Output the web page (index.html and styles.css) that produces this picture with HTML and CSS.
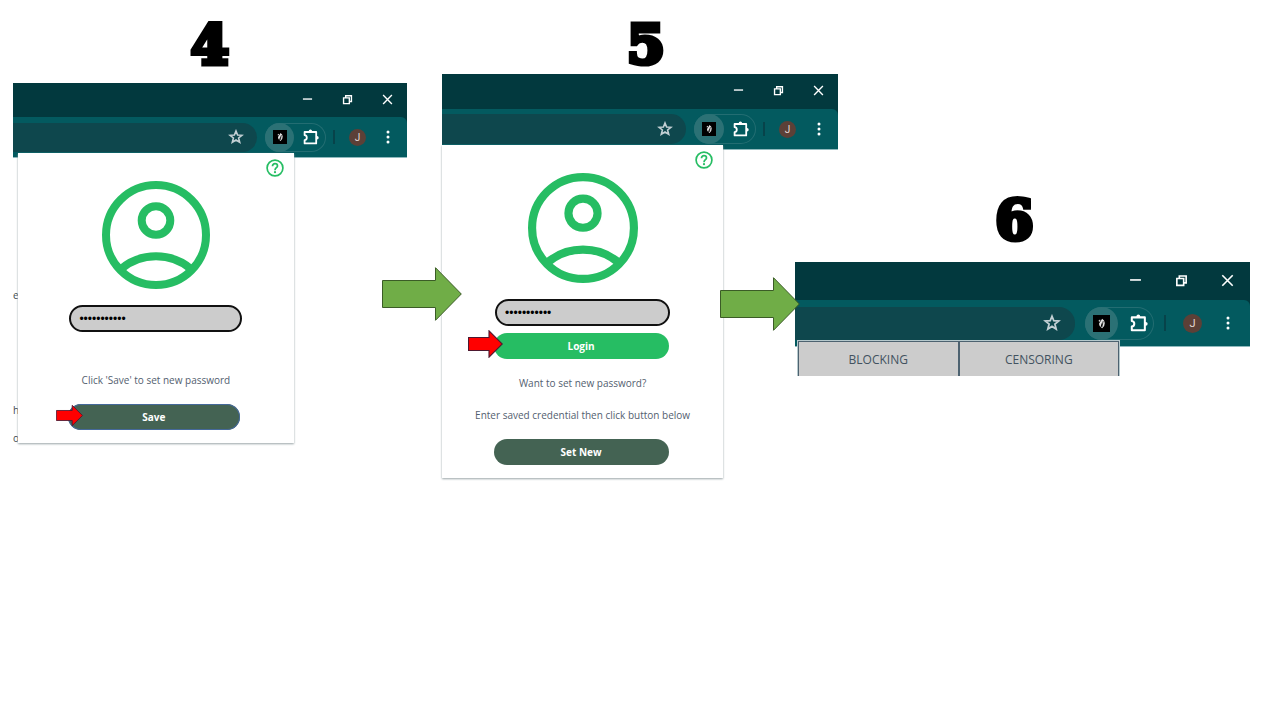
FILE: index.html
```html
<!DOCTYPE html>
<html lang="en">
<head>
<meta charset="utf-8">
<meta name="viewport" content="width=device-width, initial-scale=1">
<title>Extension setup: steps 4 to 6</title>
<link rel="stylesheet" href="styles.css">
</head>
<body>
<svg class="sprite" aria-hidden="true">
  <symbol id="minimize" viewBox="0 0 12 12"><path d="M1 5.500h10" fill="none" stroke="#fff" stroke-width="1.500"/></symbol>
  <symbol id="restore" viewBox="0 0 12 12"><path d="M1.700 4.200h6.300v6.300H1.700zM4 4V1.900h6.300v6.300H8.200" fill="none" stroke="#fff" stroke-width="1.500"/></symbol>
  <symbol id="close" viewBox="0 0 12 12"><path d="M1.200 1.200l9.600 9.600M10.800 1.200l-9.600 9.600" fill="none" stroke="#fff" stroke-width="1.500"/></symbol>
  <symbol id="star" viewBox="0 0 16 16"><path d="M8 2l1.600 4 4.300.300-3.300 2.700 1.100 4.300L8 11l-3.700 2.300 1.100-4.300-3.300-2.700L6.400 6z" fill="none" stroke="#c3d0d4" stroke-width="1.600"/></symbol>
  <symbol id="feather" viewBox="0 0 14 14"><path fill="#000" d="M0 0h14v14H0z"/><path fill="#e6e6e6" d="M7.500 3l1.600 1.500.6 2-.5 2.500L7.500 11l-.8-.6 1-2.400-.2-2-.9 2.400-.4 1.600-1-1.500-.2-1.600L6.400 5z"/><path fill="#ccc" d="M4.600 4.600l1.200-.8.4.9-1.200 1.100z"/><path stroke="#000" stroke-width=".6" d="M8.400 5L7.300 10"/></symbol>
  <symbol id="puzzle" viewBox="0 0 16 16"><path d="M1.600 3h11.600v11.400H1.600v-3.200c1.500-.2 2.200-1.200 2.200-2.500S3.100 6.400 1.600 6.200z" fill="none" stroke="#fff" stroke-width="1.800" stroke-linejoin="round"/><path d="M5.700 2.800v-.6a1.700 1.700 0 0 1 3.400 0v.6zM13.400 7h.6a1.700 1.700 0 0 1 0 3.400h-.6z" fill="#fff"/></symbol>
  <symbol id="dots" viewBox="0 0 4 16"><g fill="#fff"><circle cx="2" cy="3" r="1.500"/><circle cx="2" cy="8" r="1.500"/><circle cx="2" cy="13" r="1.500"/></g></symbol>
  <symbol id="help" viewBox="0 0 18 18"><g fill="none" stroke="#26bd63" stroke-width="1.700"><circle cx="9" cy="9" r="7.900"/><path d="M6.500 7.200C6.500 5.600 7.500 4.700 9 4.700s2.500.9 2.500 2.200c0 1.800-2.500 1.900-2.500 4.300"/></g><circle cx="9" cy="13.200" r="1.100" fill="#26bd63"/></symbol>
  <symbol id="person" viewBox="0 0 108 108"><g fill="none" stroke="#26bd63" stroke-width="8"><circle cx="54" cy="54" r="50"/><circle cx="54" cy="39.500" r="14.300"/><path d="M19 88C39 71 69 71 89 88"/></g></symbol>
  <symbol id="arrow-green" viewBox="0 0 80 54"><path d="M.5 13.500h53V.7L79.300 27 53.500 53.300V40.500H.5z" fill="#70ad47" stroke="#3b5c26"/></symbol>
  <symbol id="arrow-red" viewBox="0 0 35 28"><path d="M.5 7.500h20.500V.8L34.300 14 21 27.200V20.500H.5z" fill="#f00" stroke="#4d1830" stroke-width="1.100"/></symbol>
</svg>

<main class="steps">
  <section class="step step-save">
    <h2 class="number">4</h2>
    <div class="browser">
      <div class="titlebar">
        <button class="window-button" aria-label="Minimize"><svg><use href="#minimize"/></svg></button>
        <button class="window-button" aria-label="Restore"><svg><use href="#restore"/></svg></button>
        <button class="window-button" aria-label="Close"><svg><use href="#close"/></svg></button>
      </div>
      <div class="toolbar">
        <div class="omnibox"><button class="bookmark" aria-label="Bookmark"><svg><use href="#star"/></svg></button></div>
        <div class="extensions">
          <button class="extension" aria-label="Extension"><svg><use href="#feather"/></svg></button>
          <button class="puzzle" aria-label="Extensions"><svg><use href="#puzzle"/></svg></button>
        </div>
        <span class="divider"></span>
        <button class="profile">J</button>
        <button class="menu" aria-label="Menu"><svg><use href="#dots"/></svg></button>
      </div>
    </div>
    <div class="page">
      <div class="page-edge"><span>e</span><span>h</span><span>o</span></div>
      <form class="popup">
        <button class="help" type="button" aria-label="Help"><svg><use href="#help"/></svg></button>
        <svg class="person"><use href="#person"/></svg>
        <input class="password" type="password" aria-label="New password" value="abcdefghijk">
        <p class="hint">Click 'Save' to set new password</p>
        <div class="action">
          <button class="button button-dark button-focus" type="button">Save</button>
          <svg class="pointer pointer-small"><use href="#arrow-red"/></svg>
        </div>
      </form>
    </div>
  </section>

  <section class="step step-login">
    <h2 class="number">5</h2>
    <div class="browser">
      <div class="titlebar">
        <button class="window-button" aria-label="Minimize"><svg><use href="#minimize"/></svg></button>
        <button class="window-button" aria-label="Restore"><svg><use href="#restore"/></svg></button>
        <button class="window-button" aria-label="Close"><svg><use href="#close"/></svg></button>
      </div>
      <div class="toolbar">
        <div class="omnibox"><button class="bookmark" aria-label="Bookmark"><svg><use href="#star"/></svg></button></div>
        <div class="extensions">
          <button class="extension" aria-label="Extension"><svg><use href="#feather"/></svg></button>
          <button class="puzzle" aria-label="Extensions"><svg><use href="#puzzle"/></svg></button>
        </div>
        <span class="divider"></span>
        <button class="profile">J</button>
        <button class="menu" aria-label="Menu"><svg><use href="#dots"/></svg></button>
      </div>
    </div>
    <div class="page">
      <form class="popup">
        <button class="help" type="button" aria-label="Help"><svg><use href="#help"/></svg></button>
        <svg class="person"><use href="#person"/></svg>
        <input class="password" type="password" aria-label="Password" value="abcdefghijk">
        <div class="action">
          <button class="button button-green" type="button">Login</button>
          <svg class="pointer"><use href="#arrow-red"/></svg>
        </div>
        <p class="hint">Want to set new password?</p>
        <p class="hint">Enter saved credential then click button below</p>
        <div class="action">
          <button class="button button-dark" type="button">Set New</button>
        </div>
      </form>
    </div>
    <svg class="next"><use href="#arrow-green"/></svg>
  </section>

  <section class="step step-panel">
    <h2 class="number">6</h2>
    <div class="browser">
      <div class="titlebar">
        <button class="window-button" aria-label="Minimize"><svg><use href="#minimize"/></svg></button>
        <button class="window-button" aria-label="Restore"><svg><use href="#restore"/></svg></button>
        <button class="window-button" aria-label="Close"><svg><use href="#close"/></svg></button>
      </div>
      <div class="toolbar">
        <div class="omnibox"><button class="bookmark" aria-label="Bookmark"><svg><use href="#star"/></svg></button></div>
        <div class="extensions">
          <button class="extension" aria-label="Extension"><svg><use href="#feather"/></svg></button>
          <button class="puzzle" aria-label="Extensions"><svg><use href="#puzzle"/></svg></button>
        </div>
        <span class="divider"></span>
        <button class="profile">J</button>
        <button class="menu" aria-label="Menu"><svg><use href="#dots"/></svg></button>
      </div>
    </div>
    <div class="tabs">
      <button class="tab">BLOCKING</button>
      <button class="tab">CENSORING</button>
    </div>
    <svg class="next"><use href="#arrow-green"/></svg>
  </section>
</main>
</body>
</html>
```

FILE: styles.css
```css
* {
  box-sizing: border-box;
}

body {
  margin: 0;
  background: #fff;
  font-family: "Open Sans", "Noto Sans", sans-serif;
}

button {
  margin: 0;
  padding: 0;
  border: 0;
  background: none;
  font-family: inherit;
}

svg {
  display: block;
}

.sprite {
  position: absolute;
  width: 0;
  height: 0;
}

/* The second and third steps share the fourth track. */
.steps {
  display: grid;
  grid-template-columns: 394fr 35fr 353fr 43fr 412fr;
  align-items: start;
  padding: 20px 30px 20px 13px;
}

.step {
  position: relative;
  grid-row: 1;
  --title: 34px;
  --toolbar: 41px;
  --cell: 40px;
  --inset: 29px;
  --icon: 11px;
  --tool: 16px;
  --badge: 14px;
  --profile: 17px;
}

.step-save {
  grid-column: 1;
}

.step-login {
  grid-column: 3 / 5;
  --title: 35px;
  --inset: 30px;
}

.step-panel {
  grid-column: 4 / 6;
  margin-top: 175px;
  --title: 38px;
  --toolbar: 47px;
  --cell: 46px;
  --inset: 33px;
  --icon: 13px;
  --tool: 18px;
  --badge: 17px;
  --profile: 19px;
}

.number {
  margin: 0 0 13px;
  color: #000;
  font: bold 55px/50px "DejaVu Serif", serif;
  text-align: center;
  -webkit-text-stroke: 5px #000;
}

.step-login .number {
  margin-bottom: 4px;
  padding-left: 12px;
}

.step-panel .number {
  margin-bottom: 17px;
  padding-right: 16px;
}

/* Browser chrome */
.browser {
  background: #02393e;
}

.titlebar {
  display: flex;
  justify-content: flex-end;
  height: var(--title);
}

.window-button {
  display: grid;
  place-items: center;
  width: var(--cell);
  padding-bottom: 2px;
}

.window-button svg {
  width: var(--icon);
  height: var(--icon);
}

.toolbar {
  display: flex;
  align-items: center;
  height: var(--toolbar);
  padding-right: 17px;
  border-bottom: 1px solid #8fb9bd;
  border-top-right-radius: 6px;
  background: #035a5f;
}

.omnibox {
  display: flex;
  flex: 1;
  align-items: center;
  justify-content: flex-end;
  height: var(--inset);
  padding-right: 13px;
  border-radius: 0 16px 16px 0;
  background: #0e474d;
}

.bookmark svg,
.puzzle svg {
  width: var(--tool);
  height: var(--tool);
}

.extensions {
  display: flex;
  align-items: center;
  gap: 9px;
  height: var(--inset);
  margin-left: 8px;
  padding-right: 7px;
  border-radius: 17px;
  box-shadow: inset 0 0 0 1px #236d72;
}

.extension {
  display: grid;
  place-items: center;
  width: var(--inset);
  height: var(--inset);
  border-radius: 50%;
  background: #2b7175;
}

.extension svg {
  width: var(--badge);
  height: var(--badge);
}

.divider {
  width: 2px;
  height: 14px;
  margin-left: 7px;
  background: #07434a;
}

.profile {
  width: var(--profile);
  height: var(--profile);
  margin-left: 14px;
  border-radius: 50%;
  background: #5c4037;
  color: #e3d9d5;
  font: 10px/17px Roboto, sans-serif;
  text-align: center;
}

.menu {
  margin-left: 20px;
}

.menu svg {
  width: 4px;
  height: 16px;
}

.step-login .menu {
  margin-left: 21px;
}

.step-panel .toolbar {
  padding-right: 20px;
}

.step-panel .extensions {
  margin-left: 10px;
  padding-right: 6px;
  gap: 12px;
}

.step-panel .omnibox {
  padding-right: 14px;
}

.step-panel .divider {
  margin-left: 10px;
  height: 16px;
}

.step-panel .profile {
  margin-left: 17px;
  font-size: 11px;
  line-height: 19px;
}

.step-panel .menu {
  margin-left: 24px;
}

/* Extension popup */
.page {
  display: flex;
  margin-top: -5px;
}

.page-edge {
  display: flex;
  flex-direction: column;
  justify-content: flex-end;
  width: 5px;
  margin-bottom: -2px;
  overflow: hidden;
  color: #3b4a52;
  font-size: 10px;
  line-height: 14px;
}

.page-edge span:nth-child(2) {
  margin-top: 101px;
}

.page-edge span:nth-child(3) {
  margin-top: 14px;
}

.popup {
  display: flex;
  flex-direction: column;
  align-items: center;
  width: 70%;
  padding: 6px 10px 13px;
  background: #fff;
  box-shadow: 0 1px 2px #9aa5a8;
}

.step-login .popup {
  width: 71%;
}

.help {
  align-self: flex-end;
}

.help svg {
  width: 18px;
  height: 18px;
}

.person {
  width: 108px;
  height: 108px;
  margin-top: 4px;
}

.password {
  width: 173px;
  height: 27px;
  margin-top: 16px;
  padding: 0 8px;
  border: 2px solid #111;
  border-radius: 14px;
  background: #ccc;
  color: #000;
  font: 12px/16px "Liberation Sans", sans-serif;
}

.hint {
  margin: 40px 0 0;
  color: #53606f;
  font-size: 10px;
  line-height: 16px;
  white-space: nowrap;
}

.action {
  position: relative;
  margin: 16px 4px 0 0;
}

.button {
  display: block;
  width: 172px;
  height: 26px;
  border-radius: 13px;
  color: #fff;
  font-size: 10px;
  font-weight: 700;
  line-height: 26px;
}

.button-dark {
  background: #446353;
}

.button-green {
  background: #26bd63;
}

.button-focus {
  box-shadow: inset 0 0 0 1px #45699a;
}

.step-login .person {
  width: 110px;
  height: 110px;
}

.step-login .password,
.step-login .button {
  width: 175px;
}

.step-login .action {
  margin: 7px 3px 0 0;
}

.step-login .hint {
  margin-top: 16px;
}

.step-login .hint + .action {
  margin-top: 16px;
}

.pointer {
  position: absolute;
  top: -3px;
  left: -26px;
  width: 35px;
  height: 28px;
}

.pointer-small {
  top: -1px;
  left: -12px;
  width: 27px;
  height: 25px;
}

.next {
  position: absolute;
  top: 247px;
  left: -60px;
  width: 80px;
  height: 54px;
}

.step-panel .next {
  top: 82px;
  left: -75px;
}

/* Extension tabs */
.tabs {
  display: grid;
  grid-template-columns: 1fr 1fr;
  position: relative;
  width: 71%;
  margin: -7px 0 0 2px;
  border: 1px solid #b5c8cc;
  border-bottom: 0;
}

.tab {
  height: 35px;
  border: 1px solid #4d6270;
  border-bottom: 0;
  background: #ccc;
  color: #425260;
  font-size: 12px;
  line-height: 36px;
}
```
